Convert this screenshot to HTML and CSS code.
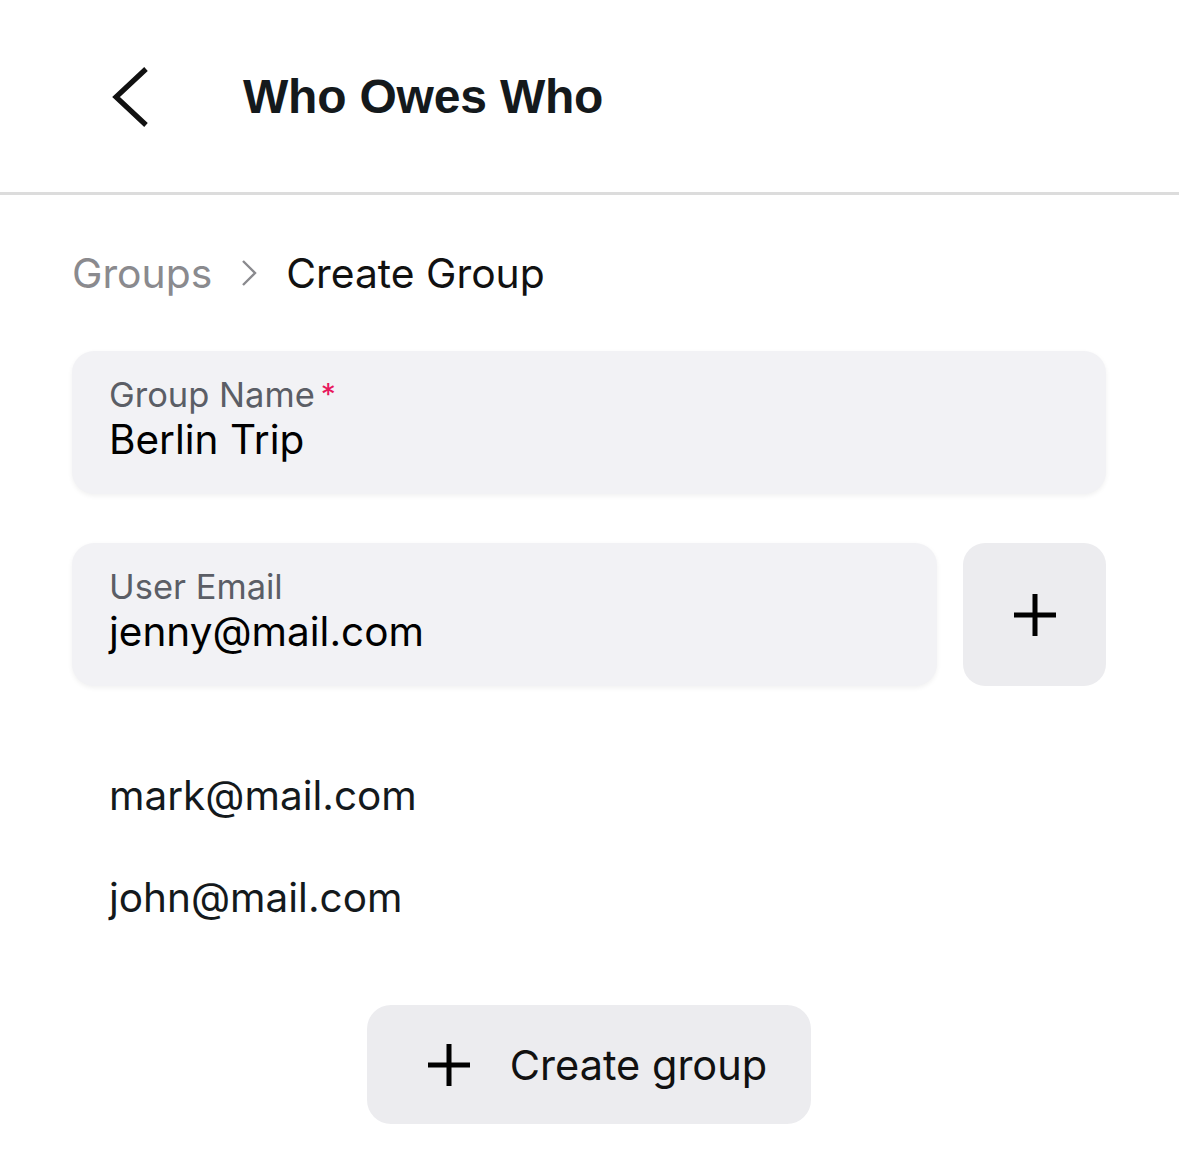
FILE: index.html
```html
<!DOCTYPE html>
<html lang="en">
<head>
<meta charset="utf-8">
<title>Who Owes Who</title>
<link rel="stylesheet" href="styles.css">
</head>
<body>
<header class="topbar">
  <button class="back" aria-label="Back">
    <svg width="40" height="60" viewBox="0 0 40 60"><path d="M34 2 L4 30 L34 58" fill="none" stroke="#111" stroke-width="5.2"/></svg>
  </button>
  <h1 class="title">Who Owes Who</h1>
</header>
<main class="content">
  <nav class="crumbs">
    <span class="crumb-link">Groups</span>
    <svg class="crumb-sep" width="18" height="28" viewBox="0 0 18 28"><path d="M3 2 L15 14 L3 26" fill="none" stroke="#8a8a8e" stroke-width="2.4"/></svg>
    <span class="crumb-current">Create Group</span>
  </nav>

  <div class="field">
    <div class="field-label">Group Name<span class="req">*</span></div>
    <div class="field-value">Berlin Trip</div>
  </div>

  <div class="email-row">
    <div class="field field-grow">
      <div class="field-label">User Email</div>
      <div class="field-value">jenny@mail.com</div>
    </div>
    <button class="add-btn" aria-label="Add">
      <svg width="44" height="44" viewBox="0 0 44 44"><path d="M22 1 V43 M1 22 H43" stroke="#000" stroke-width="5" fill="none"/></svg>
    </button>
  </div>

  <ul class="emails">
    <li>mark@mail.com</li>
    <li>john@mail.com</li>
  </ul>

  <div class="actions">
    <button class="create-btn">
      <svg width="44" height="44" viewBox="0 0 44 44"><path d="M22 1 V43 M1 22 H43" stroke="#000" stroke-width="5" fill="none"/></svg>
      <span>Create group</span>
    </button>
  </div>
</main>
</body>
</html>
```

FILE: styles.css
```css
* { box-sizing: border-box; }
html, body { margin: 0; padding: 0; background: #fff; }
body {
  font-family: Inter, "Noto Sans", "Liberation Sans", sans-serif;
  color: #111;
  width: 1179px;
}
button {
  font: inherit;
  color: inherit;
  border: none;
  cursor: pointer;
}
.topbar {
  height: 195px;
  border-bottom: 3px solid #dcdcdc;
  display: flex;
  align-items: center;
  padding-left: 112px;
  gap: 91px;
}
.back {
  background: none;
  padding: 0;
  display: flex;
  margin-top: 2px;
}
.title {
  margin: 0;
  font-family: "Liberation Sans", Arial, sans-serif;
  font-weight: 700;
  font-size: 48px;
  letter-spacing: -0.2px;
  color: #14191c;
}
.content {
  padding: 0 73px 0 72px;
}
.crumbs {
  display: flex;
  align-items: center;
  height: 156px;
  font-size: 40.8px;
}
.crumb-link { color: #8a8a8e; }
.crumb-sep { margin: 0 28px 0 28px; }
.crumb-current { color: #111; }
.field {
  height: 143px;
  background: #f2f2f5;
  border-radius: 22px;
  box-shadow: 0 2px 5px rgba(0,0,0,0.06);
  padding-left: 37px;
  display: flex;
  flex-direction: column;
  justify-content: center;
}
.field-label {
  font-size: 34.5px;
  line-height: 40px;
  color: #5b5e66;
  margin-top: -6px;
}
.req {
  display: inline-block;
  color: #e8185d;
  font-size: 30px;
  line-height: 30px;
  vertical-align: top;
  margin-left: 6px;
  margin-top: 4px;
}
.field-value {
  font-size: 40.5px;
  line-height: 50px;
  color: #000;
}
.email-row {
  display: flex;
  gap: 26px;
  margin-top: 49px;
}
.field-grow { flex: 1; }
.add-btn {
  width: 143px;
  height: 143px;
  background: #ececef;
  border-radius: 22px;
  display: flex;
  align-items: center;
  justify-content: center;
  padding: 0;
}
.emails {
  list-style: none;
  margin: 86px 0 0 0;
  padding: 0 0 0 37px;
  font-size: 40.5px;
  color: #14191c;
}
.emails li {
  height: 102px;
  line-height: 48px;
}
.actions {
  display: flex;
  justify-content: center;
  margin-top: 29px;
  padding-right: 1px;
}
.create-btn {
  width: 444px;
  height: 119px;
  background: #ececef;
  border-radius: 24px;
  display: flex;
  align-items: center;
  justify-content: center;
  gap: 39px;
  font-size: 41.5px;
  color: #111;
  padding: 0 0 0 17px;
}
```
